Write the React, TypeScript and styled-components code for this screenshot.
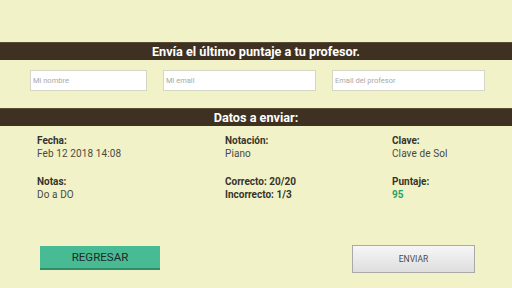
import React from "react";
import styled, { createGlobalStyle } from "styled-components";

const GlobalStyle = createGlobalStyle`
  html, body {
    margin: 0;
    padding: 0;
    background: #f2f2c9;
    font-family: Roboto, "Liberation Sans", sans-serif;
  }
`;

const Page = styled.div`
  width: 512px;
  height: 288px;
  padding-top: 42px;
  box-sizing: border-box;
  overflow: hidden;
`;

const Bar = styled.div`
  height: 18px;
  background: #3e3122;
  border-top: 1px solid #5a4b36;
  box-sizing: border-box;
  color: #ffffff;
  font-weight: 700;
  font-size: 12.7px;
  line-height: 17px;
  text-align: center;
`;

const InputRow = styled.div`
  display: flex;
  gap: 16px;
  padding-left: 30px;
  margin-top: 10px;
  margin-bottom: 17px;
`;

const Field = styled.input<{ $w: number }>`
  width: ${(p) => p.$w}px;
  height: 21px;
  box-sizing: border-box;
  border: 1px solid #d6d6c6;
  background: #ffffff;
  padding: 0 2px;
  font-family: Roboto, "Liberation Sans", sans-serif;
  font-size: 7.5px;
  outline: none;
  &::placeholder {
    color: #a8a8a8;
  }
`;

const DataGrid = styled.div`
  display: grid;
  grid-template-columns: 188px 167px 1fr;
  row-gap: 16px;
  padding-left: 37px;
  margin-top: 9px;
`;

const Cell = styled.div`
  font-size: 10px;
  line-height: 12.5px;
`;

const Label = styled.div`
  font-weight: 700;
  color: #35352b;
`;

const Value = styled.div<{ $green?: boolean; $bold?: boolean }>`
  color: ${(p) => (p.$green ? "#23a463" : p.$bold ? "#35352b" : "#4a4a40")};
  font-weight: ${(p) => (p.$bold || p.$green ? 700 : 400)};
  letter-spacing: ${(p) => (p.$bold || p.$green ? 0 : 0.1)}px;
`;

const Footer = styled.div`
  display: flex;
  justify-content: space-between;
  align-items: flex-start;
  padding: 0 37px 0 40px;
  margin-top: 44px;
`;

const BackButton = styled.button`
  width: 120px;
  height: 24px;
  margin-top: 1px;
  border: none;
  border-bottom: 2px solid #2f8e6a;
  background: #48bb94;
  color: #1d2b25;
  font-family: Roboto, "Liberation Sans", sans-serif;
  font-size: 11.5px;
  padding: 0;
`;

const SendButton = styled.button`
  width: 123px;
  height: 28px;
  border: 1px solid #a9a9a9;
  background: linear-gradient(#f6f6f6, #dedede);
  color: #4a4a4a;
  font-family: Roboto, "Liberation Sans", sans-serif;
  font-size: 8.5px;
  padding: 0;
`;

const items = [
  { label: "Fecha:", values: ["Feb 12 2018 14:08"] },
  { label: "Notación:", values: ["Piano"] },
  { label: "Clave:", values: ["Clave de Sol"] },
  { label: "Notas:", values: ["Do a DO"] },
  { label: "Correcto: 20/20", values: ["Incorrecto: 1/3"], bold: true },
  { label: "Puntaje:", values: ["95"], green: true },
];

export default function App() {
  return (
    <Page>
      <GlobalStyle />
      <Bar>Envía el último puntaje a tu profesor.</Bar>
      <InputRow>
        <Field $w={117} placeholder="Mi nombre" />
        <Field $w={153} placeholder="Mi email" />
        <Field $w={153} placeholder="Email del profesor" />
      </InputRow>
      <Bar>Datos a enviar:</Bar>
      <DataGrid>
        {items.map((it) => (
          <Cell key={it.label}>
            <Label>{it.label}</Label>
            {it.values.map((v) => (
              <Value key={v} $green={it.green} $bold={it.bold}>
                {v}
              </Value>
            ))}
          </Cell>
        ))}
      </DataGrid>
      <Footer>
        <BackButton>REGRESAR</BackButton>
        <SendButton>ENVIAR</SendButton>
      </Footer>
    </Page>
  );
}
